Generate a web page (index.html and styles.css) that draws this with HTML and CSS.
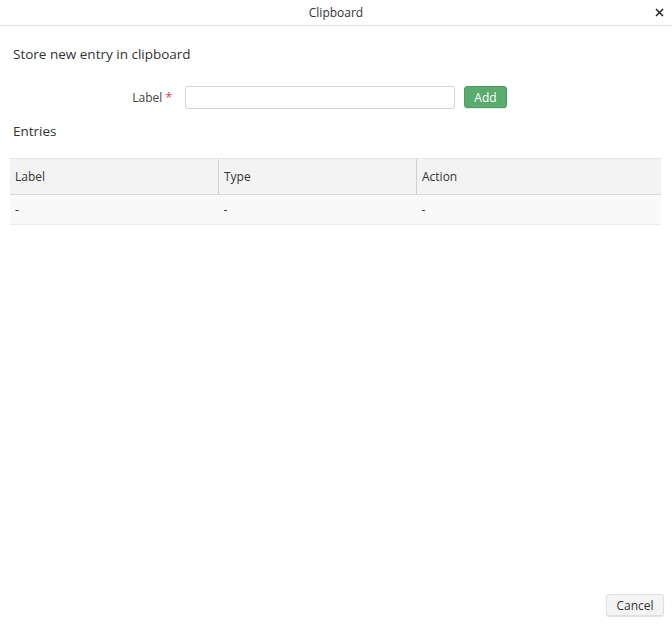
FILE: index.html
```html
<!DOCTYPE html>
<html>
<head>
<meta charset="utf-8">
<link rel="stylesheet" href="styles.css">
</head>
<body>
<div class="dialog">
  <div class="titlebar">
    <span class="title">Clipboard</span>
    <span class="close">
      <svg width="9" height="9" viewBox="0 0 9 9"><path d="M1 1L8 8M8 1L1 8" stroke="#222" stroke-width="1.5" fill="none"/></svg>
    </span>
  </div>
  <div class="content">
    <h3 class="section">Store new entry in clipboard</h3>
    <div class="form-row">
      <label class="form-label">Label <span class="req">*</span></label>
      <input class="text-input" type="text">
      <button class="btn-add">Add</button>
    </div>
    <h3 class="section entries">Entries</h3>
    <table class="grid">
      <thead>
        <tr><th class="c1">Label</th><th class="c2">Type</th><th class="c3">Action</th></tr>
      </thead>
      <tbody>
        <tr><td>-</td><td>-</td><td>-</td></tr>
      </tbody>
    </table>
  </div>
  <div class="footer">
    <button class="btn-cancel">Cancel</button>
  </div>
</div>
</body>
</html>
```
FILE: styles.css
```css
html, body {
  margin: 0;
  padding: 0;
  background: #fff;
}
body {
  font-family: "Open Sans", "Noto Sans", sans-serif;
  color: #333;
}
.dialog {
  width: 672px;
  height: 625px;
  display: flex;
  flex-direction: column;
}
.titlebar {
  height: 25px;
  border-bottom: 1px solid #ddd;
  display: flex;
  align-items: center;
  justify-content: center;
  position: relative;
  font-size: 12px;
  color: #333;
}
.title {
  line-height: 25px;
}
.close {
  position: absolute;
  right: 8px;
  top: 8px;
  width: 9px;
  height: 9px;
  display: flex;
}
.content {
  flex: 1;
  padding: 0 11px 0 10px;
}
.section {
  margin: 0;
  font-size: 13.5px;
  font-weight: normal;
  color: #333;
  padding-left: 3px;
}
.section:first-child {
  margin-top: 19px;
  line-height: 18px;
}
.form-row {
  display: flex;
  align-items: center;
  margin-top: 22px;
  height: 24px;
}
.form-label {
  width: 162px;
  text-align: right;
  font-size: 12px;
  color: #444;
  padding-right: 0;
  box-sizing: border-box;
}
.req {
  color: #e33;
}
.text-input {
  width: 270px;
  height: 23px;
  box-sizing: border-box;
  border: 1px solid #d4d4d4;
  border-radius: 3px;
  margin: 0 0 0 13px;
  padding: 0 6px;
  font-family: inherit;
  font-size: 12px;
}
.btn-add {
  margin-left: 9px;
  width: 43px;
  height: 22px;
  background: #5aab6e;
  border: 1px solid #4f9c63;
  border-radius: 3px;
  color: #fff;
  font-family: inherit;
  font-size: 12px;
  padding: 0;
  box-shadow: 0 1px 1px rgba(0,0,0,0.1);
}
.entries {
  margin-top: 13px;
  line-height: 18px;
}
.grid {
  margin-top: 18px;
  width: 651px;
  border-collapse: collapse;
  font-size: 12px;
  color: #333;
}
.grid th {
  background: #f3f3f3;
  font-weight: normal;
  text-align: left;
  height: 35px;
  padding: 0 5px;
  border-top: 1px solid #e6e6e6;
  border-bottom: 1px solid #d8d8d8;
  border-left: 1px solid #d0d0d0;
}
.grid th:first-child {
  border-left: none;
}
.grid td {
  background: #f9f9f9;
  height: 29px;
  padding: 0 5px;
  border-bottom: 1px solid #ececec;
}
.c1 { width: 198px; }
.c2 { width: 187px; }
.footer {
  display: flex;
  justify-content: flex-end;
  padding: 0 8px 9px 0;
}
.btn-cancel {
  width: 58px;
  height: 22px;
  background: #f4f4f4;
  border: 1px solid #e0e0e0;
  border-radius: 3px;
  font-family: inherit;
  font-size: 12px;
  color: #333;
  padding: 0;
  box-shadow: 0 1px 1px rgba(0,0,0,0.12);
}
```
